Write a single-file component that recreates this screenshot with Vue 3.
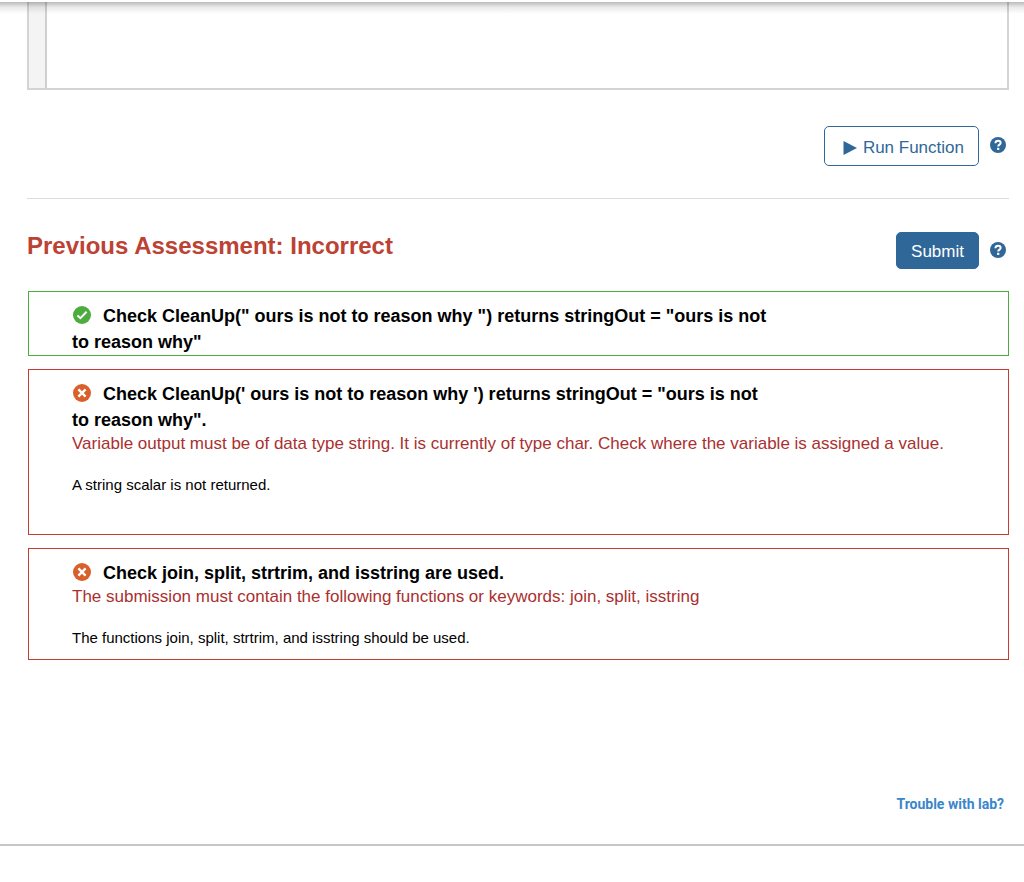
<template>
  <div class="lab-page">
    <div class="editor">
      <div class="editor-gutter"></div>
      <textarea class="editor-code" aria-label="Code editor"></textarea>
    </div>

    <div class="run-row">
      <button type="button" class="btn btn-outline">
        <svg class="play-icon" viewBox="0 0 14 14" width="14" height="14" aria-hidden="true">
          <path fill="currentColor" d="M0.5 0L14 7L0.5 14Z" />
        </svg>
        Run Function
      </button>
      <button type="button" class="help-button" aria-label="Run help">
        <svg viewBox="0 0 16 16" width="16" height="16">
          <circle cx="8" cy="8" r="8" fill="#2f6799" />
          <path d="M5.4 6.3C5.5 4.6 6.6 3.8 8.1 3.8C9.6 3.8 10.6 4.7 10.6 5.9C10.6 7.6 8.2 7.7 8.2 9.5" fill="none" stroke="#fff" stroke-width="2" />
          <rect x="7.1" y="10.8" width="2.2" height="2.1" fill="#fff" />
        </svg>
      </button>
    </div>

    <div class="assessment-header">
      <h2 class="assessment-title">Previous Assessment: Incorrect</h2>
      <div class="submit-group">
        <button type="button" class="btn btn-solid">Submit</button>
        <button type="button" class="help-button" aria-label="Submit help">
          <svg viewBox="0 0 16 16" width="16" height="16">
            <circle cx="8" cy="8" r="8" fill="#2f6799" />
            <path d="M5.4 6.3C5.5 4.6 6.6 3.8 8.1 3.8C9.6 3.8 10.6 4.7 10.6 5.9C10.6 7.6 8.2 7.7 8.2 9.5" fill="none" stroke="#fff" stroke-width="2" />
            <rect x="7.1" y="10.8" width="2.2" height="2.1" fill="#fff" />
          </svg>
        </button>
      </div>
    </div>

    <div class="results">
      <div
        v-for="check in checks"
        :key="check.title"
        class="check"
        :class="[check.passed ? 'passed' : 'failed', { roomy: check.roomy }]"
      >
        <h3 class="check-title">
          <svg class="status-icon" viewBox="0 0 18 18" width="18" height="18" aria-hidden="true">
            <circle cx="9" cy="9" r="9" :fill="check.passed ? '#4dab3f' : '#d9602a'" />
            <path v-if="check.passed" d="M4.4 9.4L7.4 12.2L13.6 5.8" fill="none" stroke="#fff" stroke-width="2" />
            <path v-else d="M5.4 5.4L12.6 12.6M12.6 5.4L5.4 12.6" fill="none" stroke="#fff" stroke-width="2.4" />
          </svg>
          <span>{{ check.title }}</span>
        </h3>
        <p v-if="check.error" class="check-error">{{ check.error }}</p>
        <p v-if="check.feedback" class="check-feedback">{{ check.feedback }}</p>
      </div>
    </div>

    <div class="lab-footer">
      <a href="#" class="trouble-link">Trouble with lab?</a>
    </div>
  </div>
</template>

<script setup>
// Results of the last submission, in display order
const checks = [
  {
    passed: true,
    title: 'Check CleanUp(" ours is not to reason why ") returns stringOut = "ours is not to reason why"'
  },
  {
    passed: false,
    roomy: true,
    title: 'Check CleanUp(\' ours is not to reason why \') returns stringOut = "ours is not to reason why".',
    error: 'Variable output must be of data type string. It is currently of type char. Check where the variable is assigned a value.',
    feedback: 'A string scalar is not returned.'
  },
  {
    passed: false,
    title: 'Check join, split, strtrim, and isstring are used.',
    error: 'The submission must contain the following functions or keywords: join, split, isstring',
    feedback: 'The functions join, split, strtrim, and isstring should be used.'
  }
]
</script>

<style>
body {
  margin: 0;
  background-color: #fff;
}
</style>

<style scoped>
.lab-page {
  position: relative;
  margin-top: 2px;
  padding: 0 15px 30px 27px;
  border-bottom: 2px solid #c6c6c6;
  font-family: "Liberation Sans", Arial, sans-serif;
  color: #000;
}

/* Shadow cast by the bar above */
.lab-page::before {
  content: "";
  position: absolute;
  top: 0;
  left: 0;
  right: 0;
  height: 12px;
  background: linear-gradient(rgba(0, 0, 0, 0.27), rgba(0, 0, 0, 0.08) 45%, rgba(0, 0, 0, 0));
  pointer-events: none;
}

/* Editor */
.editor {
  display: flex;
  height: 86px;
  border: 2px solid #d4d4d4;
  border-top: none;
}

.editor-gutter {
  width: 16px;
  background-color: #f4f4f4;
  border-right: 2px solid #d0d0d0;
}

.editor-code {
  flex: 1;
  border: none;
  outline: none;
  resize: none;
  padding: 4px;
  background-color: #fff;
}

/* Buttons */
.run-row {
  display: flex;
  align-items: center;
  justify-content: flex-end;
  gap: 11px;
  padding: 36px 3px 32px 0;
  border-bottom: 1px solid #dcdcdc;
}

.btn {
  box-sizing: border-box;
  border: 1px solid #2f6799;
  border-radius: 5px;
  font-family: inherit;
  font-size: 17px;
  line-height: 20px;
  cursor: pointer;
}

.btn-outline {
  display: flex;
  align-items: center;
  gap: 6px;
  height: 40px;
  padding: 4px 14px 0 18px;
  background-color: #fff;
  color: #2f6799;
}

.btn-solid {
  height: 37px;
  padding: 2px 14px 0;
  background-color: #2f6799;
  color: #fff;
}

.help-button {
  display: flex;
  width: 16px;
  height: 16px;
  margin-bottom: 2px;
  padding: 0;
  border: none;
  background: none;
  cursor: pointer;
}

/* Assessment heading */
.assessment-header {
  display: flex;
  justify-content: space-between;
  padding: 33px 3px 22px 0;
}

.assessment-title {
  margin: 0;
  font-size: 24px;
  font-weight: bold;
  line-height: 28px;
  color: #bc4234;
}

.submit-group {
  display: flex;
  align-items: center;
  gap: 11px;
}

/* Check results */
.results {
  display: flex;
  flex-direction: column;
  gap: 13px;
  margin-left: 1px;
}

.check {
  padding: 11px 43px 0;
  border: 1px solid #c43d2f;
}

.check.passed {
  border-color: #4dab3f;
}

.check.failed {
  padding-bottom: 11px;
}

.check.roomy {
  padding-bottom: 39px;
}

.check-title {
  max-width: 700px;
  margin: 0;
  font-size: 18px;
  font-weight: bold;
  line-height: 26px;
}

.status-icon {
  margin: 0 12px 0 1px;
  vertical-align: -2px;
}

.check-error {
  margin: 0;
  font-size: 17px;
  line-height: 22px;
  color: #aa3030;
}

.check-feedback {
  margin: 20px 0 0;
  font-size: 15px;
  line-height: 20px;
}

/* Footer */
.lab-footer {
  display: flex;
  justify-content: flex-end;
  padding: 134px 5px 0 0;
}

.trouble-link {
  font-family: Roboto, sans-serif;
  font-size: 14px;
  font-weight: bold;
  line-height: 20px;
  color: #3986cb;
  text-decoration: none;
}

.trouble-link:hover {
  text-decoration: underline;
}
</style>
